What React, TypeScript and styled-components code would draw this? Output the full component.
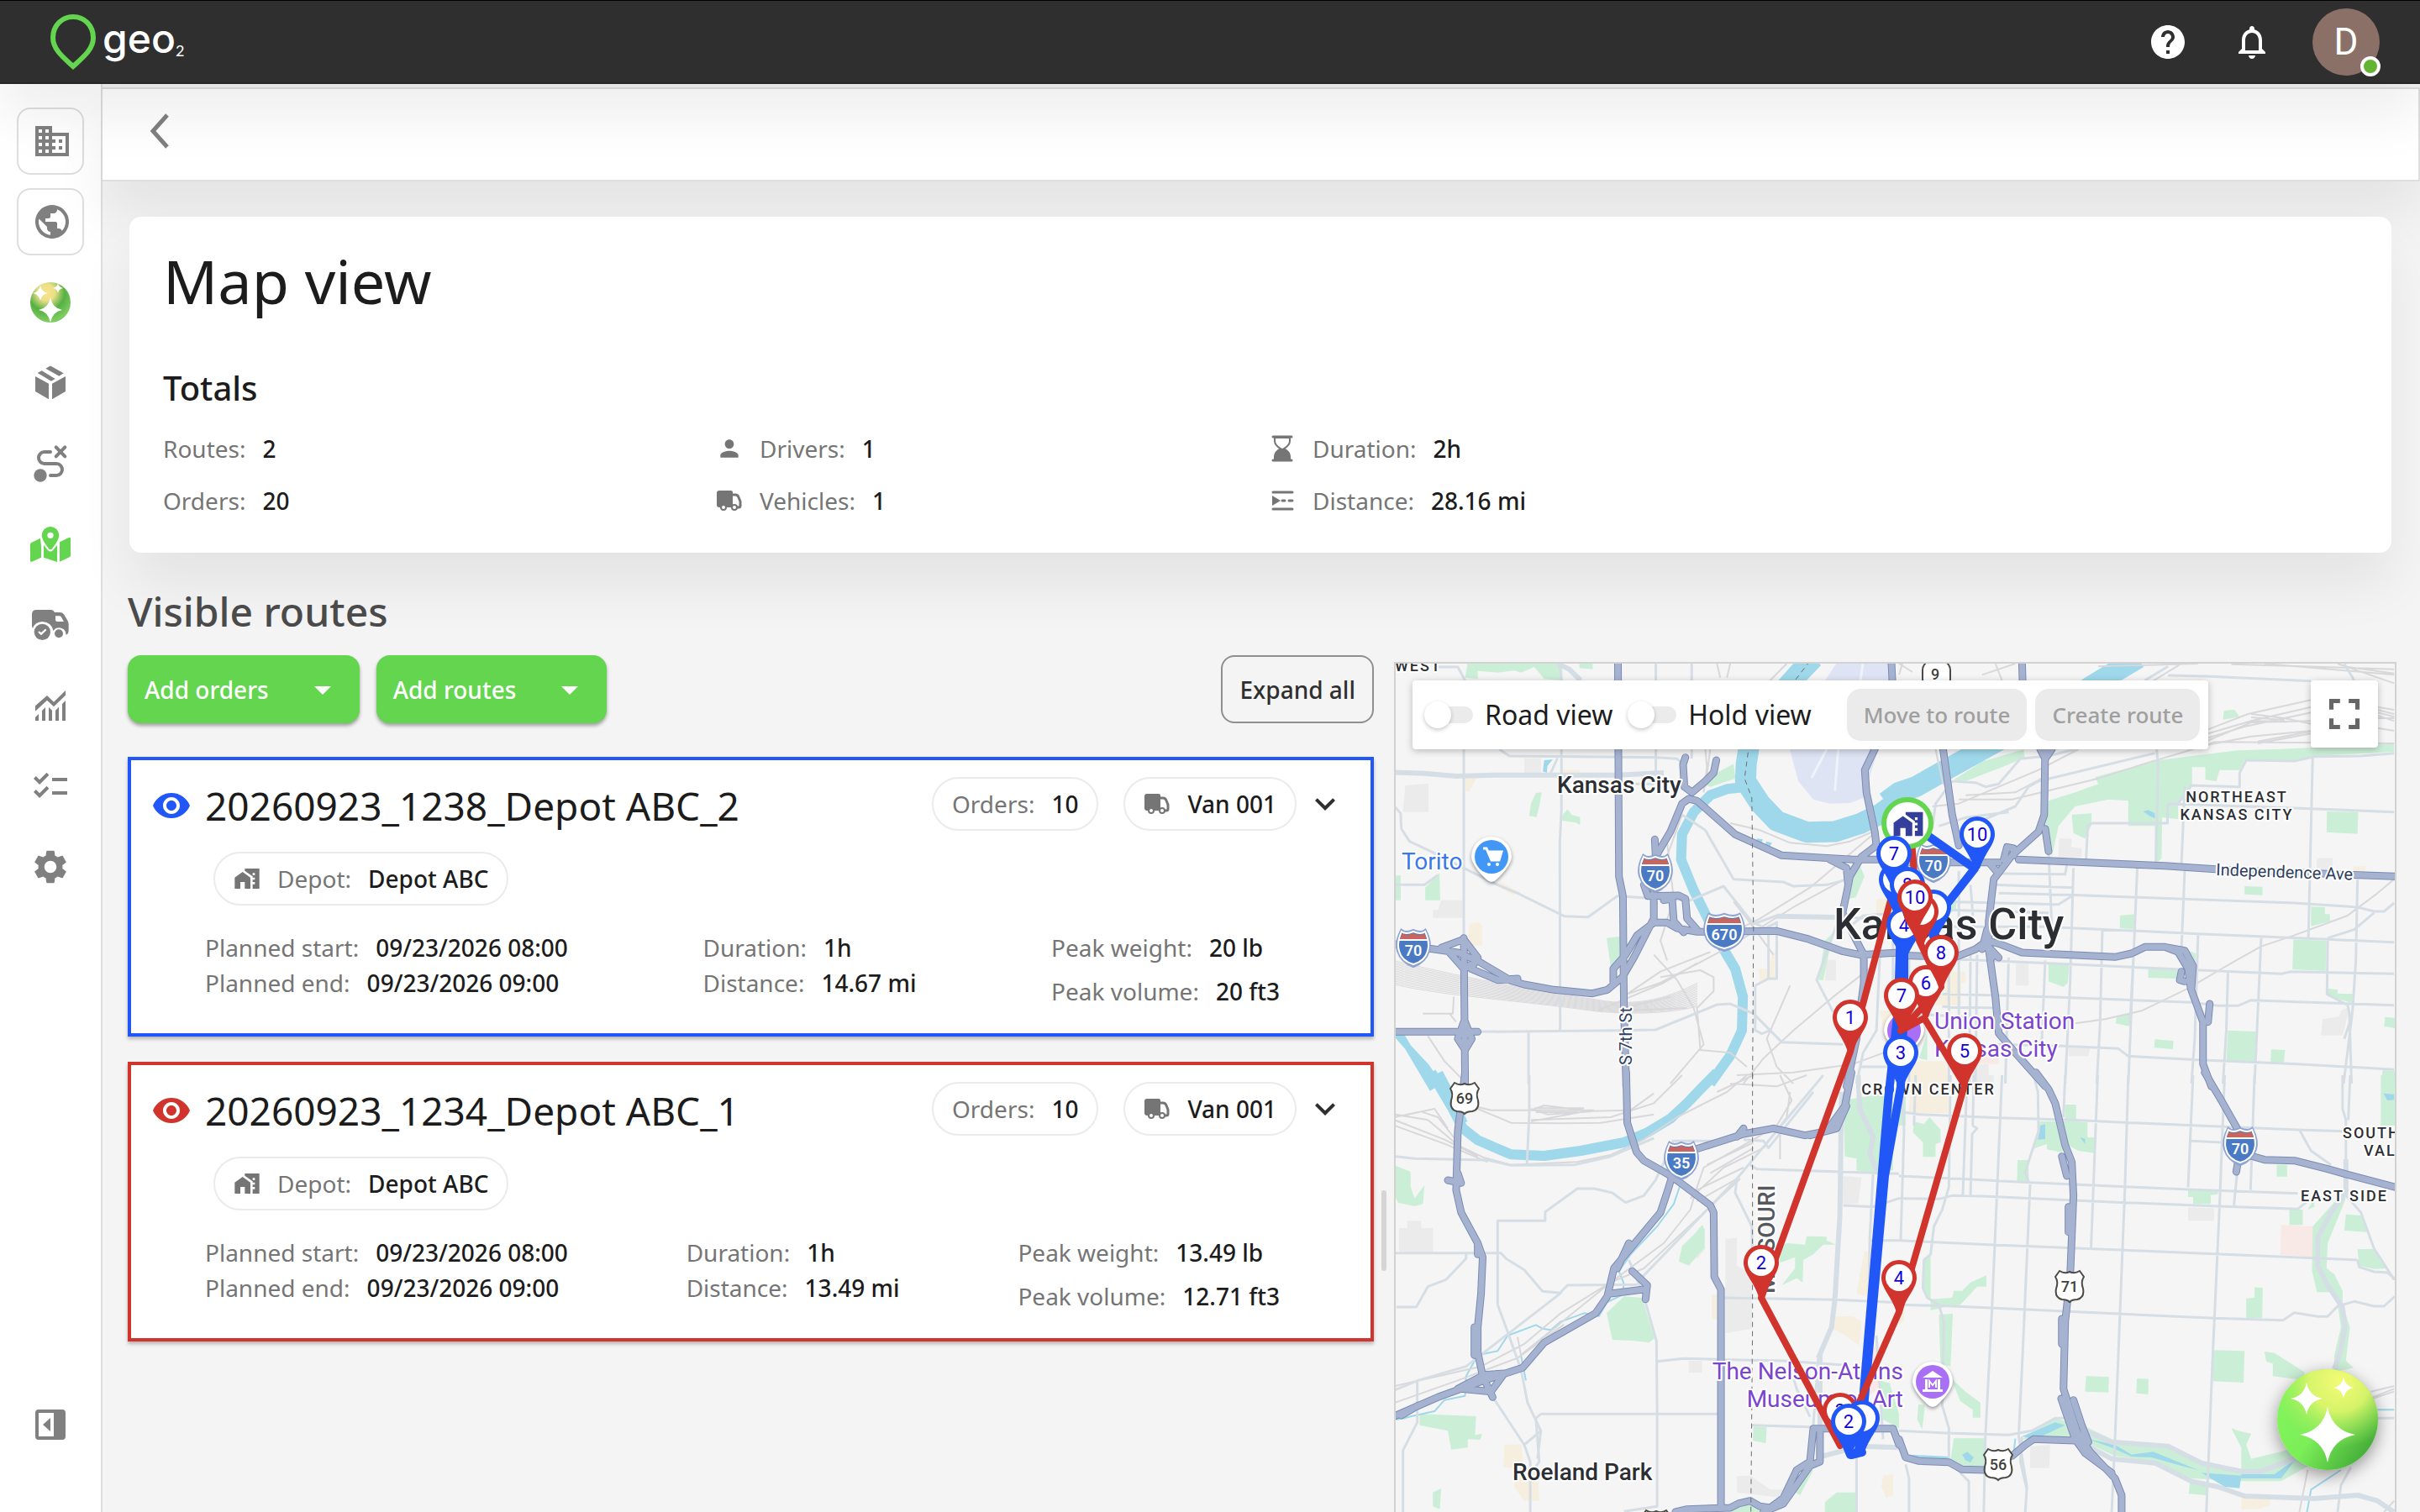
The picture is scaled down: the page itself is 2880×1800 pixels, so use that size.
import React, { useState } from "react";
import styled, { createGlobalStyle } from "styled-components";
import {
  MdArrowDropDown,
  MdChecklist,
  MdDomain,
  MdFullscreen,
  MdHelp,
  MdHomeWork,
  MdKeyboardArrowDown,
  MdNotificationsNone,
  MdPerson,
  MdPublic,
  MdSettings,
  MdVisibility,
} from "react-icons/md";

const color = {
  green: "#63d54e",
  blue: "#2257f7",
  red: "#d0342c",
  ink: "#1c1c1c",
  muted: "#757575",
  icon: "#808080",
  line: "#dedede",
  page: "#f4f4f4",
  header: "#2f2f2f",
};

const softShadow = "0 40px 64px rgba(0, 0, 0, 0.065)";

const GlobalStyle = createGlobalStyle`
  *, *::before, *::after { box-sizing: border-box; }
  body { margin: 0; background: ${color.page}; }
  body, button, input { font-family: "Noto Sans", sans-serif; }
  h1, h2, h3, p, dl, dd, dt, ul { margin: 0; padding: 0; }
  ul { list-style: none; }
  svg { display: block; flex: none; }
  button { cursor: pointer; }
`;

/* ---------- shell ---------- */

const Shell = styled.div`
  display: flex;
  flex-direction: column;
  height: 100vh;
  overflow: hidden;
  color: ${color.ink};
  font-size: 28px;
  line-height: 40px;
`;

const Header = styled.header`
  position: relative;
  z-index: 2;
  display: flex;
  align-items: center;
  justify-content: space-between;
  flex: none;
  height: 100px;
  padding: 0 48px 0 60px;
  background: ${color.header};
  border-top: 1px solid #000;
  border-bottom: 2px solid #262626;
  box-shadow: ${softShadow};
`;

const Brand = styled.a`
  display: flex;
  align-items: center;
  gap: 6px;
  color: #fff;
  text-decoration: none;
`;

const BrandText = styled.span`
  font: 500 48px/64px Inter, sans-serif;
  padding-bottom: 8px;

  sub {
    font: 400 18px/18px Lato, sans-serif;
    vertical-align: baseline;
    position: relative;
    top: 4px;
  }
`;

const HeaderActions = styled.div`
  display: flex;
  align-items: center;
  gap: 52px;
`;

const IconButton = styled.button`
  display: grid;
  place-items: center;
  padding: 0;
  border: 0;
  background: none;
  color: inherit;
`;

const HeaderIcon = styled(IconButton)`
  color: #fff;
`;

const Avatar = styled(IconButton)`
  position: relative;
  width: 80px;
  height: 80px;
  margin-left: -4px;
  border-radius: 50%;
  background: #8a7066;
  color: #fff;
  font: 400 44px/80px Roboto, sans-serif;

  &::after {
    content: "";
    position: absolute;
    right: -1px;
    bottom: -1px;
    width: 24px;
    height: 24px;
    border: 4px solid #fff;
    border-radius: 50%;
    background: #64b434;
  }
`;

const Body = styled.div`
  display: flex;
  flex: 1;
  min-height: 0;
`;

const Sidebar = styled.nav`
  display: flex;
  flex-direction: column;
  justify-content: space-between;
  flex: none;
  width: 122px;
  padding: 28px 20px 64px;
  background: #fff;
  border-right: 2px solid ${color.line};
`;

const NavList = styled.ul`
  display: grid;
  gap: 16px;
`;

const NavItem = styled(IconButton)<{ $boxed?: boolean; $active?: boolean }>`
  width: 80px;
  height: 80px;
  color: ${(p) => (p.$active ? color.green : color.icon)};
  border: ${(p) => (p.$boxed ? `2px solid ${color.line}` : "0")};
  border-radius: 16px;
  padding-left: ${(p) => (p.$boxed ? "4px" : "0")};
`;

const Main = styled.main`
  display: flex;
  flex-direction: column;
  flex: 1;
  min-width: 0;
  padding-top: 4px;
`;

const TopBar = styled.div`
  display: flex;
  align-items: center;
  flex: none;
  height: 112px;
  padding: 0 56px 8px;
  background: #fff;
  border: 2px solid ${color.line};
  border-left: 0;
  box-shadow: ${softShadow};
  color: ${color.icon};
`;

const Content = styled.div`
  display: flex;
  flex-direction: column;
  flex: 1;
  min-height: 0;
  padding: 42px 28px 0 30px;
`;

/* ---------- totals ---------- */

const TotalsCard = styled.section`
  margin: 0 6px 0 2px;
  padding: 40px 40px 42px;
  border-radius: 14px;
  background: #fff;
  box-shadow: ${softShadow};
`;

const PageTitle = styled.h1`
  font-size: 72px;
  font-weight: 400;
  line-height: 72px;
`;

const SectionTitle = styled.h2`
  margin: 68px 0 28px;
  font-size: 40px;
  font-weight: 500;
  line-height: 48px;
`;

const TotalsGrid = styled.dl`
  display: grid;
  grid-template-columns: repeat(4, 1fr);
  gap: 22px 20px;
`;

const FactBox = styled.div`
  display: flex;
  align-items: center;
  gap: 20px;
  white-space: nowrap;

  dt {
    display: flex;
    align-items: center;
    gap: 20px;
    color: ${color.muted};
  }

  dd {
    font-weight: 500;
  }
`;

/* ---------- routes ---------- */

const Split = styled.div`
  display: grid;
  grid-template-columns: 1483fr 24px 1193fr;
  flex: 1;
  min-height: 0;
`;

const RoutesColumn = styled.section`
  min-width: 0;
  padding-top: 42px;
`;

const RoutesTitle = styled.h2`
  color: #4a4a4a;
  font-size: 48px;
  font-weight: 500;
  line-height: 56px;
`;

const Toolbar = styled.div`
  display: flex;
  gap: 20px;
  margin: 24px 0 40px;
`;

const AddButton = styled.button`
  display: flex;
  align-items: center;
  gap: 40px;
  height: 81px;
  padding: 0 20px;
  border: 0;
  border-radius: 16px;
  background: ${color.green};
  box-shadow: 0 3px 4px rgba(0, 0, 0, 0.35);
  color: #fff;
  font-size: 28px;
  font-weight: 500;
  white-space: nowrap;
`;

const OutlineButton = styled.button`
  height: 81px;
  margin-left: auto;
  padding: 0 20px;
  border: 2px solid #8f8f8f;
  border-radius: 16px;
  background: none;
  color: ${color.header};
  font-size: 28px;
  font-weight: 500;
  white-space: nowrap;
`;

const RouteList = styled.div`
  display: grid;
  gap: 30px;
`;

const RouteCard = styled.article<{ $color: string }>`
  padding: 20px 30px 28px 24px;
  border: 4px solid ${(p) => p.$color};
  background: #fff;
  box-shadow: 0 3px 4px rgba(0, 0, 0, 0.25);
`;

const RouteHead = styled.div`
  display: flex;
  align-items: center;
`;

const RouteLabel = styled.div`
  display: flex;
  align-items: center;
  gap: 16px;
  height: 64px;
  margin-right: auto;
  padding-top: 4px;
`;

const EyeButton = styled(IconButton)<{ $color: string }>`
  color: ${(p) => p.$color};
`;

const RouteName = styled.h3`
  font-size: 46px;
  font-weight: 400;
  line-height: 60px;
  white-space: nowrap;
`;

const Chip = styled.dl`
  display: flex;
  width: max-content;
  height: 64px;
  padding: 0 22px;
  border: 2px solid #ebebeb;
  border-radius: 32px;

  svg {
    color: ${color.muted};
  }
`;

const HeadChip = styled(Chip)`
  margin-left: 30px;
`;

const DepotChip = styled(Chip)`
  margin: 25px 0 30px 74px;
`;

const Chevron = styled(IconButton)`
  margin-left: 10px;
  color: ${color.header};
`;

const Facts = styled.div`
  display: flex;
  justify-content: space-between;
  padding: 0 78px 0 64px;
`;

const FactColumn = styled.dl<{ $loose?: boolean }>`
  display: grid;
  align-content: start;
  gap: ${(p) => (p.$loose ? "12px" : "2px")};
  height: 94px;
`;

const Handle = styled.div`
  align-self: start;
  justify-self: center;
  width: 6px;
  height: 96px;
  margin-top: 759px;
  border-radius: 3px;
  background: #d5d5d5;
`;

/* ---------- map ---------- */

const MapFrame = styled.section`
  position: relative;
  margin-top: 130px;
  overflow: hidden;
  border: 2px solid #d2d2d2;
  border-bottom: 0;
  background: #f5f5f5;
`;

const MapCanvas = styled.svg`
  width: 100%;
  height: 100%;
  font-family: Roboto, sans-serif;
`;

const MapToolbar = styled.div`
  position: absolute;
  top: 20px;
  left: 20px;
  display: flex;
  align-items: center;
  gap: 10px;
  height: 82px;
  padding: 10px;
  border-radius: 4px;
  background: #fff;
  box-shadow: 0 2px 8px rgba(0, 0, 0, 0.25);
`;

const ToggleLabel = styled.label`
  display: flex;
  align-items: center;
  gap: 14px;
  padding: 0 4px;
  font-size: 32px;
  white-space: nowrap;
`;

const Toggle = styled.input`
  position: relative;
  appearance: none;
  width: 58px;
  height: 20px;
  margin: 0;
  border-radius: 10px;
  background: #ebebeb;

  &::before {
    content: "";
    position: absolute;
    top: -6px;
    left: 0;
    width: 32px;
    height: 32px;
    border-radius: 50%;
    background: #fff;
    box-shadow: 0 2px 5px rgba(0, 0, 0, 0.22);
  }

  &:checked::before {
    left: 26px;
    background: ${color.green};
  }
`;

const MapAction = styled.button`
  height: 62px;
  padding: 0 20px;
  border: 0;
  border-radius: 16px;
  background: #ebebeb;
  color: #9f9f9f;
  font-size: 26px;
  font-weight: 500;
  white-space: nowrap;
`;

const ActionGroup = styled.div`
  display: flex;
  gap: 10px;
  margin-left: 28px;
`;

const FullscreenButton = styled(IconButton)`
  position: absolute;
  top: 20px;
  right: 20px;
  width: 80px;
  height: 80px;
  border-radius: 4px;
  background: #fff;
  box-shadow: 0 2px 8px rgba(0, 0, 0, 0.25);
  color: #666;
`;

const AssistantButton = styled(IconButton)`
  position: fixed;
  right: 50px;
  bottom: 50px;
  width: 120px;
  height: 120px;
  border-radius: 50%;
  box-shadow: 0 6px 20px rgba(0, 0, 0, 0.4);
`;

/* ---------- icons ---------- */

const star = (cx: number, cy: number, rx: number, ry: number) => {
  const k = 0.16;
  return `M${cx} ${cy - ry}Q${cx + rx * k} ${cy - ry * k} ${cx + rx} ${cy}Q${cx + rx * k} ${cy + ry * k} ${cx} ${cy + ry}Q${cx - rx * k} ${cy + ry * k} ${cx - rx} ${cy}Q${cx - rx * k} ${cy - ry * k} ${cx} ${cy - ry}Z`;
};

const SparkleSmall = () => (
  <svg width="48" height="48" viewBox="0 0 48 48">
    <defs>
      <radialGradient id="orb-small" cx="0.4" cy="0.25" r="0.7">
        <stop offset="0" stopColor="#fbe38c" />
        <stop offset="0.3" stopColor="#e9e087" />
        <stop offset="0.65" stopColor="#55b043" />
        <stop offset="1" stopColor="#7ccb5e" />
      </radialGradient>
    </defs>
    <circle cx="24" cy="24" r="24" fill="url(#orb-small)" />
    <path d={star(24, 33, 14, 15)} fill="#fff" />
    <path d={star(12, 13, 9, 9)} fill="#fff" />
    <path d={star(33, 7, 6, 6)} fill="#fff" />
  </svg>
);

const SparkleLarge = () => (
  <svg width="120" height="120" viewBox="0 0 120 120">
    <defs>
      <linearGradient id="orb-base" x1="0" y1="0.3" x2="0.9" y2="0.9">
        <stop offset="0" stopColor="#83f55c" />
        <stop offset="0.45" stopColor="#7bee58" />
        <stop offset="1" stopColor="#41a836" />
      </linearGradient>
      <radialGradient id="orb-glow" cx="0.62" cy="0.12" r="0.66">
        <stop offset="0" stopColor="#f3fb74" />
        <stop offset="0.45" stopColor="#e2f56c" stopOpacity="0.9" />
        <stop offset="1" stopColor="#a0e85c" stopOpacity="0" />
      </radialGradient>
    </defs>
    <circle cx="60" cy="60" r="60" fill="url(#orb-base)" />
    <circle cx="60" cy="60" r="60" fill="url(#orb-glow)" />
    <path d={star(60, 78, 33, 33)} fill="#fff" />
    <path d={star(35, 35, 19, 19)} fill="#fff" />
    <path d={star(79, 22, 12, 12)} fill="#fff" />
  </svg>
);

const BoxIcon = () => (
  <svg width="48" height="48" viewBox="48 36 144 144" fill="currentColor">
    <path d="M66 84L114 110V166L66 138ZM126 110L174 84V138L126 166ZM74 72L89 64L137 93L123 101ZM103 56L117 48Q120 47 123 48L167 73L151 83Z" />
  </svg>
);

const RouteIcon = () => (
  <svg width="48" height="48" viewBox="48 324 144 144" fill="none" stroke="currentColor" strokeWidth="12" strokeLinecap="round">
    <path d="M120 354H98a20 21 0 0 0 0 42H142a20 21 0 0 1 0 42H120M140 337L172 370M172 337L140 370" />
    <circle cx="84" cy="438" r="23" fill="currentColor" stroke="none" />
  </svg>
);

const MapPinIcon = () => (
  <svg width="48" height="48" viewBox="48 612 144 144" fill="currentColor">
    <path d="M52 678L84 662Q86 683 87 689V731L54 746Q48 748 48 742V684Q48 680 52 678ZM153 676L186 660Q192 658 192 664V722Q192 728 188 730L153 746ZM96 686L110 704Q120 715 130 704L144 686V747L96 731Z" />
    <path fillRule="evenodd" d="M120 621A31 31 0 0 1 151 652Q151 668 126 700Q120 706 114 700Q89 668 89 652A31 31 0 0 1 120 621ZM120 641a11 11 0 1 0 0 22a11 11 0 1 0 0-22Z" />
  </svg>
);

const TruckCheckIcon = () => (
  <svg width="48" height="48" viewBox="48 900 144 144" fill="currentColor">
    <path fillRule="evenodd" d="M70 918H122Q131 918 135 927H153Q163 927 168 934L180 954Q185 962 185 970V990Q185 1005 176 1007Q174 983 151 982Q136 983 131 993Q124 962 91 960Q64 962 57 984Q54 980 54 975V934Q54 918 70 918ZM138 940V954Q138 960 144 960H168L158 943Q156 940 152 940Z" />
    <circle cx="91" cy="997" r="29" />
    <circle cx="150" cy="1003" r="15" />
    <path d="M80 998L87 1004L102 990" fill="none" stroke="#fff" strokeWidth="7" strokeLinecap="round" />
  </svg>
);

const ChartIcon = () => (
  <svg width="48" height="48" viewBox="48 1188 144 144" fill="currentColor">
    <path d="M66 1261L108 1224L132 1247L174 1206V1223L132 1264L108 1241L66 1280ZM66 1302L78 1290V1314H66ZM90 1278L102 1266V1314H90ZM114 1266L126 1277V1314H114ZM138 1277L150 1265V1314H138ZM162 1254L174 1242V1314H162Z" />
  </svg>
);

const PanelIcon = () => (
  <svg width="48" height="48" viewBox="0 0 48 48" fill="currentColor">
    <path fillRule="evenodd" d="M10 6H38Q42 6 42 10V38Q42 42 38 42H10Q6 42 6 38V10Q6 6 10 6ZM10 10V38H28V10ZM24 16V32L15 24Z" />
  </svg>
);

const BackIcon = () => (
  <svg width="24" height="42" viewBox="0 0 24 42" fill="none" stroke="currentColor" strokeWidth="5">
    <path d="M21 2L4 21L21 40" />
  </svg>
);

const VanIcon = () => (
  <svg width="32" height="32" viewBox="0 0 32 32">
    <path d="M4 4H18Q20 4 20 6V24H4Q1 24 1 21V7Q1 4 4 4Z" fill="currentColor" />
    <path d="M20 9H23Q26 9 27 12L29 17V22Q29 24 27 24H20" fill="none" stroke="currentColor" strokeWidth="3" />
    <circle cx="9" cy="24" r="3" fill="#fff" stroke="currentColor" strokeWidth="2" />
    <circle cx="22" cy="24" r="3" fill="#fff" stroke="currentColor" strokeWidth="2" />
  </svg>
);

const HourglassIcon = () => (
  <svg width="32" height="32" viewBox="0 0 32 32">
    <path d="M5 2H27M5 30H27" stroke="currentColor" strokeWidth="3" strokeLinecap="round" />
    <path d="M7 3V7Q7 12 14 16Q7 20 7 25V29H25V25Q25 20 18 16Q25 12 25 7V3Z" fill="none" stroke="currentColor" strokeWidth="2" />
    <path d="M7 29V25Q7 20 13 16H19Q25 20 25 25V29Z" fill="currentColor" />
  </svg>
);

const DistanceIcon = () => (
  <svg width="32" height="32" viewBox="0 0 32 32">
    <path d="M5 6H28M5 26H28" stroke="currentColor" strokeWidth="3" strokeLinecap="round" />
    <path d="M16 16H19M24 16H28" stroke="currentColor" strokeWidth="3" strokeLinecap="round" />
    <path d="M4 10L14 16L4 22Z" fill="currentColor" />
  </svg>
);

/* ---------- map drawing ---------- */

type Tile = {
  x: number;
  y: number;
  [layer: string]: string | number;
};

/* Every tile covers 620 x 510 map pixels and keeps its geometry on its own grid. */
const tiles: Tile[] = [
  {
    x: 1640,
    y: 770,
    airport: "M1385 50H1550L1545 120L1505 366L1460 540L1420 558L1360 560L1310 545L1265 480L1240 370L1300 200Z",
    runway: "M1350 366L1305 468M1385 366L1375 515M1460 50L1452 120",
    park:
      "M270 55H555V120L500 115L490 100L470 72L430 92L410 85L360 92L300 86V115L262 110ZM606 55H646V80L606 76ZM475 522L492 520L487 560L477 608L455 604L460 560ZM570 580L583 600L608 608V637L595 628L552 620L556 600ZM50 818L68 816V905H50ZM185 808L187 905H142V860ZM688 1040L728 1035V1110L700 1140ZM980 490L1020 450L1070 418L1076 470L1000 500ZM1450 780L1464 820L1438 895L1418 900L1430 820ZM1345 1050L1370 1020L1340 1190H1325Z",
    sand:
      "M556 438L608 440V450L556 452ZM262 465L298 466L275 517L262 515ZM275 990L300 983L313 995V1066L270 1070ZM370 840L430 880L405 885L350 850ZM1185 1100L1197 1090L1195 1190L1150 1195L1145 1150L1175 1150ZM1500 900H1568V960H1500ZM1510 1300H1568V1420H1530Z",
    block: "M440 398H490V450H440ZM82 495L152 488V590L75 590ZM190 905L255 905V968H165V940H180ZM1350 1118H1378V1192H1345Z",
    pond: "M500 405L526 402L510 425L508 450L496 445ZM1140 685L1158 688L1155 700L1138 696ZM1168 695L1186 700L1180 712L1166 706Z",
    river: "M1310 40L1262 100L1210 170L1120 330L1108 420L1106 480L1150 560L1200 622L1290 662L1375 660L1450 632L1510 598L1590 530",
    creek: "M1110 500L1050 508L1000 530L950 590L915 670L912 760L950 870L992 970L1030 1060L1075 1150L1098 1250L1095 1370L1060 1460L1000 1560",
    creek2: "M50 1375L90 1430L145 1500L190 1580M70 1390L110 1470L165 1580",
    rail:
      "M1020 60L1030 110M1060 60L1050 110M985 365L990 430L980 520M1000 365L985 500M1230 60L1180 120M870 700L890 900L850 1050L870 1120M915 600L860 780M1060 630L1150 655L1240 700L1350 712L1420 695L1490 660M1490 670L1300 860L1150 970L1050 1030M1490 700L1420 820L1250 930L1060 1070L980 1120L850 1200L750 1240M135 1310H225L228 1250M215 1310L235 1340M850 1180L970 1155L1010 1180V1230L960 1290L970 1440L1060 1450L1110 1500M830 1100L900 1190L950 1290L980 1420L880 1560M1070 910L1110 970L1190 1100M1240 1210L1170 1400L1200 1500L1250 1560M1500 1130L1370 1250L1250 1370L1160 1470L1100 1560M1568 1430L1430 1490L1250 1520L1080 1530M150 1390L200 1480L250 1540M660 1300L860 1200L960 1130M750 1240L850 1160L1000 1090M740 1290L880 1250M740 1300L930 1290",
    minor:
      "M170 72H240L262 120M258 366L258 1040M545 60L552 120V580L547 700L548 1368M836 60V460M944 60V400M365 366L395 390L840 395L900 400L920 420M50 570L68 595L70 650L95 695L175 740L258 790L350 845L420 880L560 962L632 965L720 890L850 900L940 905L1040 855L1130 990L1200 960L1375 965L1568 975M50 850H140L180 815M915 600L985 655L1070 830L1220 840L1250 855L1350 850L1400 835M300 1375L720 1370L835 1368L1020 1278L1060 1275L1130 1310L1215 1412L1400 1420M453 1375V1560M1135 1210V1370L1155 1382L1180 1370M1175 1000V1185M1200 980V1185H1175L1135 1210M1130 985L1165 1005L1200 985M1390 960L1320 1190L1370 1305M1420 1000L1460 960L1568 950M1450 1500H1568M1510 1110L1500 1370L1460 1450L1440 1560M1550 1000V1560M620 490H830M520 450L540 398",
    wide: "M50 448L140 452L235 462L350 458L530 458H720L860 450M540 60L575 80L610 120M1200 962L1375 966",
    major:
      "M722 50L725 820L737 890L740 1290L747 1570M50 1375H300M258 1040L262 1570M50 1062L155 1078L240 1092L300 1122L400 1192L440 1206L530 1225L645 1238L690 1225L735 1180L770 1110L830 970L830 860M832 760L845 730L880 660L915 560L935 543L960 550L1075 670L1215 745L1430 760H1510M708 1200V1150L745 1100L780 1030L830 985L870 985L900 1005L960 1018L1200 1015L1290 1042L1400 1088L1450 1100L1568 1092M833 688L836 760M925 395L918 420L922 500L945 520L985 480L1010 450L1018 405M190 1075L258 1045L300 1110L280 1150L360 1190L420 1185M210 1085L258 1150L300 1120M800 850L812 890L905 888L925 900L930 970L960 1010M860 905L885 900L890 980L920 1020M258 1340L240 1400L262 1440L282 1400L262 1340M1545 50L1548 125L1495 366L1465 440L1470 520L1495 660L1500 710L1455 750L1420 820L1412 870L1398 950L1440 1050L1462 1100L1462 1200L1440 1400L1410 1570M1360 760L1410 790L1415 850",
    border: "M1300 50L1255 120L1115 366L1103 470L1125 540L1130 1000L1127 1570",
  },
  {
    x: 2260,
    y: 770,
    park:
      "M375 366L378 395L320 425L200 480L165 475L250 410ZM450 550L530 520L600 490L590 465L780 405L1020 370L1150 365L1490 345V375L1250 390L1180 410L1040 405L1025 440L965 440L955 480L922 475V430H882V490L840 560V615L792 610L790 755L770 780V640H690V550L630 545L530 570L515 590L480 640L460 750L440 650ZM520 600L580 595L578 640L560 685L525 665ZM1288 588L1382 590L1380 668L1287 662ZM978 228L1010 225L1025 250L975 260ZM1040 855L1094 857V887L1040 884ZM1240 928L1282 930V955L1297 955V980L1240 998ZM1187 1045L1286 1050L1284 1158L1184 1152ZM665 960L708 955V1008L665 1005ZM450 1130L512 1135L508 1200L495 1215L450 1195ZM750 1150L838 1155L835 1185L750 1182ZM860 1080L893 1095V1130L870 1130ZM1290 1220L1320 1225V1238L1365 1240L1362 1272L1288 1245ZM655 1320L697 1312L692 1355L652 1345ZM990 1370L1075 1374L1072 1483L985 1480ZM770 1402L826 1407L824 1437L768 1432ZM1120 1438L1162 1440L1158 1492L1118 1488ZM1463 1322L1492 1325V1362L1460 1355ZM1455 1512L1492 1515V1560H1452ZM155 900L172 895V940L155 950ZM60 1470L85 1380V1475Z",
    sand: "M1368 785L1404 783V803L1366 803ZM140 1160L200 1160V1200H187V1280H110V1240H140ZM0 1490L70 1480L140 1480L150 1560H0Z",
    block: "M482 685H520L518 715L550 720V752H480ZM1258 755H1305V808H1256ZM352 1130H390V1210H352ZM1330 1300L1357 1285L1335 1388H1270L1275 1330L1325 1320ZM510 1430L575 1435L570 1462H510ZM220 1490H270V1560H220Z",
    rose: "M240 1440L300 1450V1490L240 1488Z",
    river: "M-40 555L0 520L50 500L140 440L300 335L450 235L600 125L720 40",
    pond: "M735 588L750 583L770 595V612L755 605Z",
    rail:
      "M0 60L40 90M0 100L10 60M350 60L250 100M310 120L290 60M850 60L740 140M900 60L600 70M1000 62L1490 80M1100 60L1490 100M1320 60L1490 130M1340 70L1490 95M100 570L180 560L300 500L420 440L540 366M180 545L340 545L600 470L760 410L860 375L950 340L1490 345M200 530L350 520L430 470M930 295L1050 240L1240 190M930 310L1060 265L1240 215M930 325L1040 285L1240 235M930 335L1060 270L1240 265M930 350L1060 320L1240 300M1060 240L1160 255L1240 275M1060 252L1160 262M1060 264L1170 268M1080 345L1240 310M1080 338L1240 302M1440 215L1490 225M1440 225L1490 240M1440 235L1490 250M1440 245L1490 265M1440 255L1490 255M1440 290L1490 300M1490 830L1440 880L1350 960L1190 1030L1090 1070L1000 1130L870 1220L730 1300L620 1330L530 1345M130 480L150 520M110 366L130 480",
    minor:
      "M810 102L920 105L1240 122M740 120L810 70M1340 60L1370 120M1490 380L1390 390L1250 392L1190 408L1045 405L1025 450V500L880 495L840 560L808 565V630L580 630L568 640L563 760M810 560L1240 578L1490 590M775 366L780 420L773 775M860 500L850 775M1245 395L1232 1040M160 480L230 485L260 500L300 490L365 400L450 390L530 366M100 650L110 560L160 480M250 620L350 570L390 500L420 480L770 380M120 640L200 610L330 590M450 730L460 1000M300 810L500 812L505 780M285 850L525 860M300 880L510 886L720 895L1190 915L1380 930L1430 945L1460 945L1490 915M130 910L480 920L520 890M150 940L450 950M40 1000L450 1000L530 1005L720 1015L900 1025L1100 1035L1290 1045L1490 1055M1290 1040L1370 1010L1430 950M60 1110L450 1130L720 1145L1150 1168L1180 1160L1490 1168M130 1240L450 1250L880 1270L960 1282H1020L1060 1262L1200 1268L1490 1280M130 1285L290 1290M280 1420L480 1425L660 1435L690 1462L900 1475L1200 1490L1490 1510M717 790L690 1560M860 795L850 1080M1380 830L1375 1120L1365 1300L1338 1560M1355 1300L1362 1560M525 790L515 1200L500 1560M900 1030L890 1400L880 1560M1090 1040L1070 1560M1290 1050L1288 1240L1350 1280L1360 1330L1340 1400M990 1165L985 1370L975 1560M705 1115L695 1350M612 1010L605 1350L595 1560M440 1120L430 1400L410 1440M330 1110L320 1560M235 1100L230 1560M215 1100L212 1560M180 800V1350M215 850L225 1000M150 1120V1560M30 1100V1560M0 1180L140 1165M30 1310L310 1330",
    major:
      "M370 50L372 125M132 360L160 600L180 710M440 360L437 600L420 660L340 745L285 830L270 980V1080L290 1250L300 1380L350 1450L440 1570M440 650L450 730M425 366L440 400L460 366M0 770H300M270 770L292 800M315 760L325 715L345 720L345 745M360 760L800 782L1000 798L1490 820M0 1102L170 1108L230 1080L265 1050L300 1060L370 1092L650 1108L700 1095L740 1072L800 1072L840 1090L870 1150L878 1220L915 1340L915 1490L940 1570M265 1010L250 1080M260 1060L300 1110M280 1110L260 1060M800 1072L860 1085L885 1140L880 1220M850 1160L845 1190L860 1195M935 1275L930 1340",
  },
  {
    x: 1640,
    y: 1280,
    park:
      "M50 322L98 345V398L110 440L140 392L135 460L110 468L60 455L50 430ZM975 535L983 550V615L935 680L905 665L915 610L950 570ZM1290 575L1350 577V590L1378 605L1340 605L1310 640L1280 660L1278 740L1260 725L1215 750L1255 690V650L1210 670L1200 620L1230 600L1285 605ZM740 790L795 795L832 940L815 955L765 948L705 945L688 850ZM125 1210L295 1218L292 1285L313 1280L308 1302L270 1300V1330L220 1337L210 1270L125 1250ZM50 1230L120 1210L80 1230ZM165 1490L190 1475L186 1550L165 1540ZM1130 1255L1170 1258L1167 1315L1128 1305ZM1380 1490H1440V1560H1345V1525ZM1060 1550L1120 1520L1160 1560H1050ZM1400 90L1550 60V340L1500 355L1440 340V298L1405 290ZM1240 1480L1290 1400L1310 1410L1270 1500ZM1510 1090L1540 1100L1568 1210V1260L1520 1230Z",
    sand: "M1005 785L1020 782V870H1005ZM1370 862L1430 860L1455 880L1448 965L1400 925L1365 905ZM380 1320L430 1318L440 1400H480L485 1520H440L410 1470L412 1405L378 1400ZM1463 630L1490 630L1500 800L1440 780ZM1520 1430L1550 1425V1500L1530 1510L1515 1470Z",
    block: "M88 520H130V546H166V630H63V546H88ZM1045 585L1080 580V680L1125 710V905L1045 922ZM940 600L975 585L985 620L960 655L940 630ZM1395 360L1455 365L1445 460H1395ZM935 1020H975V1062H935ZM1080 1432L1120 1430L1180 1480H1240L1220 1510L1080 1490Z",
    rose: "M1480 1000L1500 960L1510 1110L1475 1150Z",
    creek: "M1020 -10L970 50L930 100L880 155L810 205L740 240L610 270L500 288L400 283L300 232L255 190L225 120L160 -10",
    creek2: "M185 -10L225 80L260 170",
    stream: "M910 390L890 460L840 540L760 640L725 700L740 745L735 785L690 810L665 860L620 850L550 880L520 910L495 905L475 892L390 930L360 985L300 1000L265 1075L262 1145L200 1160L170 1200L55 1230M545 890L430 1000L445 1090M1335 1365L1400 1345L1460 1325H1560",
    rail:
      "M50 140L150 160L240 250L320 295L400 320L600 310L700 285L800 230L900 150L1050 60L1110 0M50 160L200 230L300 290M50 180L200 245L330 310M50 150L130 130L180 150L240 240M90 140L170 120L210 190M300 120L400 170L550 172L670 170L830 140M290 110L340 125H460L500 108L640 128L760 125L830 65M460 120L510 140L640 130M460 125H650M460 165L620 130M470 118H620M475 132H600M915 0L830 100L700 150L460 160M1020 60L1130 0M1060 30L1200 40L1290 0M1210 0L1245 90L1200 180L1130 230L980 330L960 400L940 480L860 600L700 740L550 850L440 960L310 1040L50 1110M1240 60L1230 150L1160 260L1040 330L940 440M1130 240L990 320M1130 260L1000 350M1100 330L960 410M1080 370L960 450M1210 200V300M1090 370L800 690L700 740L430 1000M430 1000L420 935M50 1170L240 1090L420 1010L560 890",
    minor:
      "M455 0V140L448 320M50 290L110 298L330 303L400 322L590 320L700 290L830 225M50 635H370L385 655L440 695L495 772L550 778L265 1040L120 1090L50 1125M265 640V655L205 730L150 755L115 828L55 828M360 820V520H503V488L600 405H650L705 420L745 455L800 430L835 375L865 300L888 235H1050M550 775L570 750L780 748M360 820L385 900L430 1050L450 1170L490 1270L480 1370M118 1090V1240L75 1340V1560M340 1140L440 1320L458 1380V1560M755 660L800 790L838 950L840 1210V1540L740 1558M840 1022L920 1012L1120 1018L1220 1020L1400 1035M490 1210L1025 1210M490 1210L475 1225L485 1380L465 1415M440 1320L490 1270M1340 0L1080 370L780 740M1080 370L1075 420L1125 540L1127 650M1120 320L1140 335L1568 352M1040 795L1375 802L1568 812M1125 1250L1300 1256M1395 350L1390 500L1375 800L1365 900L1325 1010L1310 1250M1395 60V350M1440 1350V1560M1490 350L1480 580L1470 1260M1400 465L1490 470L1568 440M1480 590H1568M1500 930L1520 1300M1300 1070L1240 1040L1260 1120L1300 1220M1100 230L1160 235L1175 260L1310 60M950 260H890",
    wide: "M1395 60L1390 500L1375 800L1365 900L1325 1010M1445 0L1450 120L1490 220L1480 280L1500 340M1340 1360L1450 1325L1568 1330M1330 1000V1250",
    major:
      "M747 -10L750 170L778 275L800 305L870 352L905 380L1000 465L1010 490L1012 720L1032 765V1545M262 -10L240 200L235 410L250 490L300 600L315 650L310 780L300 900V990L315 1075L345 1150M885 360L875 400L850 490L710 690L690 790L655 850L500 955L435 1045L320 1090L180 1150L45 1220M700 780L800 765M755 600L720 690M240 350L250 385L210 375M300 640L300 600M290 900L290 1000M765 700L810 750L805 800M1425 -10L1405 110L1350 200L1285 215L1190 190L1100 210L955 265M1300 215L1380 190L1410 110M1100 190L1080 220M240 1120L320 1070L380 1065L340 1130L250 1120M120 1180L70 1215M895 1560L930 1550L1060 1545L1085 1530L1120 1520L1150 1540L1180 1545L1220 1510L1260 1410L1300 1380L1310 1262H1550L1568 1320M1160 1560L1220 1530L1300 1395L1330 1380V1262",
    border: "M1127 -10L1127 900L1122 1570",
  },
  {
    x: 2260,
    y: 1280,
    park:
      "M45 165L75 175L92 150L125 195V240L110 245V292H72V240L42 205ZM500 105H533V165L567 168V222H588V278L540 270L500 245L490 275L445 265V245L400 265L425 165H500ZM357 303H390V380H355ZM1450 0H1492V180H1450ZM1137 320H1168V362H1137ZM870 412L960 415V425L938 428V460H885V435H870ZM1175 480H1215V535H1175ZM1345 497L1395 502L1408 560L1340 555ZM1380 622L1430 620L1465 690L1430 692L1385 680ZM1245 540L1320 440H1345L1290 600L1287 690L1310 710L1335 770V820L1357 900L1345 1020L1368 1045L1310 1060V1000L1330 900L1320 820L1300 775H1258L1243 700ZM263 715V755L235 755L185 820L130 830L95 840V800L160 795L165 770H190L215 740ZM75 665L95 640V800L75 780ZM120 855L162 852L155 1040L125 1030ZM155 1080L200 1130L245 1170V1223H222V1195L185 1165ZM58 1175L78 1178L70 1265L55 1230ZM1045 797L1070 795V757L1095 760L1093 868H1045ZM945 982L1040 985L1037 1098L945 1093ZM563 1074L632 1078L630 1133L560 1130ZM716 1083L751 1085L750 1140L714 1136ZM1100 987L1130 992L1220 1060V1090L1125 1075V1030L1105 1022ZM165 1297L262 1297L260 1410H205L155 1375ZM370 1300L470 1225L560 1255L650 1305L800 1320L900 1380L1050 1410L1100 1405L1200 1360L1240 1390L1180 1430L1150 1450L1030 1450L880 1440L770 1380L650 1360L560 1310ZM1000 1260L1020 1270L1060 1280L1045 1320L1060 1370L1200 1330V1400L1030 1430V1330ZM875 1455L930 1458L925 1500L872 1495ZM1230 480L1250 440V470ZM0 0L20 40V180H0Z",
    sand: "M35 30H150V135H30ZM1030 1510L1115 1505L1118 1535L1080 1550H1030ZM0 830H15V880L0 890Z",
    block: "M870 472L948 475V520H870ZM395 1325L455 1320L452 1403H395ZM230 0H285V25H230Z",
    rose: "M1150 535L1245 540V648L1148 642Z",
    pond: "M425 180L440 175V228L418 230ZM545 222L560 228V245ZM1458 65L1490 68V88L1470 90ZM190 1355L205 1345L225 1365L215 1383L200 1375ZM370 1290L470 1240L500 1250L410 1300ZM570 1300L650 1320L700 1355L765 1345L900 1410L850 1395L760 1365L700 1362L640 1330ZM910 1420L1030 1430L1025 1475L980 1470ZM1030 1425L1130 1425L1195 1370L1150 1440H1030ZM30 1355L150 1362V1380L40 1372Z",
    stream: "M1330 1410L1240 1480L1228 1560M1440 1195H1490M350 1298L345 1350",
    rail: "M1420 1130L1490 1110M1425 1150L1490 1120M1425 1155L1490 1130M1230 1410L1205 1560M1490 1520L1460 1560",
    minor:
      "M0 130L60 140L300 152L520 160L700 170L900 180L1200 195L1340 200M0 360L180 370L370 382L680 398L870 408L1200 422M0 440L120 442L160 430L250 432L680 455L960 468L1200 478L1240 440M0 590L270 605L680 625L1380 660M0 820L120 823L400 838L660 852L950 868L1155 875L1190 848L1260 862H1290L1320 825L1370 808L1430 825H1460L1492 790M0 1270L140 1278L330 1285L400 1270L470 1225L510 1225M1380 660L1385 685L1430 702L1470 705L1495 730M310 0L280 830L260 1290L255 1560M395 380L370 1050L360 1290L385 1470L380 1560M690 0L680 400L665 850L650 1300L640 1560M598 0L578 615M500 0L495 150M980 0L965 460L945 980L925 1560M885 0L870 400M1070 0L1058 410M880 235L970 240M1020 320L1008 465M1335 0V120L1345 160V430M1358 0L1352 160M1205 195L1240 270L1300 320M1345 430L1390 490L1430 620L1490 730M10 0L15 200L5 590M50 0L45 180M155 0L150 400L130 480L105 540L95 640L75 660L72 760L85 795L120 820M205 0L192 430M225 0L222 180L235 190L220 210L215 430M405 0L418 60L420 200L395 290L380 345L390 380M120 820L135 880L130 1180L150 1260V1380L210 1450V1560M20 1390L30 1440V1560M370 1290L365 1380L385 1480M1440 1225H1490M1360 1400L1330 1465L1320 1560",
    wide:
      "M1345 300V420L1300 490L1260 580V680L1290 750L1335 830L1342 900L1330 980L1310 1050M510 1225L560 1270L640 1310L810 1325L910 1385L1030 1415H1090L1190 1370M560 1320L640 1370L770 1385L880 1450L960 1470L1040 1503L1250 1512L1380 1500L1440 1520L1490 1560",
    major:
      "M412 -10L450 50L470 100L500 250L520 310L525 430L515 720L500 880L495 1120L535 1270L575 1345L650 1440L670 1500V1570M490 290L505 360M510 470V560M490 870V960M488 1155L530 1300L560 1350L640 1420M525 1160L550 1250L570 1310M920 -10L970 90L1020 195M1015 345L1020 310M1050 285L1100 302L1190 305L1290 335L1350 355L1495 400M0 1300L20 1365L60 1378L150 1382L190 1408L260 1410M340 1360L380 1320L405 1300L530 1305",
  },
];

const layers: { key: string; fill?: string; stroke?: string; width?: number; dash?: string; cap?: "butt" | "round" }[] = [
  { key: "airport", fill: "#dfe4f5" },
  { key: "runway", stroke: "#f0f3fb", width: 3 },
  { key: "block", fill: "#ebebeb" },
  { key: "sand", fill: "#f6efdf" },
  { key: "rose", fill: "#f8e8e6" },
  { key: "park", fill: "#cbeed7" },
  { key: "pond", fill: "#9fd8ea" },
  { key: "river", stroke: "#9fd8ea", width: 25 },
  { key: "creek", stroke: "#9fd8ea", width: 12 },
  { key: "creek2", stroke: "#9fd8ea", width: 8 },
  { key: "stream", stroke: "#9fd8ea", width: 2 },
  { key: "rail", stroke: "#d8d8db", width: 2 },
  { key: "minor", stroke: "#d6dee5", width: 3 },
  { key: "wide", stroke: "#d6dee5", width: 6 },
  { key: "major", stroke: "#7b8bb6", width: 9, cap: "round" },
  { key: "major", stroke: "#a6b3d0", width: 7, cap: "round" },
  { key: "border", stroke: "#6a6d70", width: 1, dash: "6 5" },
];

const BaseMap = () => (
  <g strokeLinejoin="round">
    {Array.from({ length: 15 }, (_, i) => (
      <path
        key={i}
        d={`M1660 ${1144 + i * 2}C1720 ${1158 + i * 2} 1800 ${1176 + i} 1900 ${1190 + i}C1950 ${1200 + i * 0.6} 1990 ${1186 + i * 1.4} 2020 ${1170 + i * 2}`}
        fill="none"
        stroke="#dadadc"
        strokeWidth="1"
      />
    ))}
    {layers.map((layer, i) => (
      <g
        key={i}
        fill={layer.fill ?? "none"}
        stroke={layer.stroke}
        strokeWidth={layer.width}
        strokeDasharray={layer.dash}
        strokeLinecap={layer.cap ?? "butt"}
      >
        {tiles.map((tile) =>
          tile[layer.key] ? (
            <path
              key={`${tile.x}-${tile.y}`}
              d={String(tile[layer.key])}
              transform={`translate(${tile.x} ${tile.y}) scale(0.39541 0.33333)`}
              vectorEffect="non-scaling-stroke"
            />
          ) : null
        )}
      </g>
    ))}
  </g>
);

const MapText = styled.text<{ $size: number; $color?: string; $weight?: number; $tracked?: boolean }>`
  font-size: ${(p) => p.$size}px;
  font-weight: ${(p) => p.$weight ?? 400};
  letter-spacing: ${(p) => (p.$tracked ? "2px" : "normal")};
  fill: ${(p) => p.$color ?? "#2c2e33"};
  stroke: #fff;
  stroke-width: 4px;
  stroke-linejoin: round;
  paint-order: stroke;
`;

const Interstate = ({ x, y, label }: { x: number; y: number; label: string }) => {
  const w = label.length > 2 ? 22 : 18;
  return (
    <g transform={`translate(${x} ${y})`}>
      <path
        d={`M${-w + 4} -20Q${-w / 2} -16 0 -20Q${w / 2} -16 ${w - 4} -20Q${w + 3} -6 ${w} 4Q${w - 4} 17 0 22Q${-w + 4} 17 ${-w} 4Q${-w - 3} -6 ${-w + 4} -20Z`}
        fill="#4a7ac4"
        stroke="#8fa3d0"
        strokeWidth="4"
      />
      <path
        d={`M${-w + 4} -19Q${-w / 2} -15 0 -19Q${w / 2} -15 ${w - 4} -19Q${w + 2} -6 ${w - 1} 4Q${w - 4} 16 0 20Q${-w + 4} 16 ${-w + 1} 4Q${-w - 2} -6 ${-w + 4} -19Z`}
        fill="#4a7ac4"
        stroke="#fff"
        strokeWidth="2"
      />
      <path d={`M${-w + 5} -17Q${-w / 2} -13 0 -17Q${w / 2} -13 ${w - 5} -17L${w - 2} -10H${-w + 2}Z`} fill="#c9655f" />
      <path d={`M${-w + 1} -9H${w - 1}`} stroke="#fff" strokeWidth="2" />
      <text y="10" textAnchor="middle" fontSize="18" fontWeight="600" fill="#fff">
        {label}
      </text>
    </g>
  );
};

const UsShield = ({ x, y, label }: { x: number; y: number; label?: string }) => (
  <g transform={`translate(${x} ${y})`}>
    <path
      d="M-12 -18Q-6 -14 0 -17Q6 -14 12 -18L17 -11Q13 -5 16 3Q18 14 9 16Q3 16 0 19Q-3 16 -9 16Q-18 14 -16 3Q-13 -5 -17 -11Z"
      fill="#fff"
      stroke="#4b4b46"
      strokeWidth="2"
    />
    {label && (
      <text y="7" textAnchor="middle" fontSize="18" fontWeight="500" fill="#3f3f3c">
        {label}
      </text>
    )}
  </g>
);

const PoiMark = styled.g`
  filter: drop-shadow(0 2px 2px rgba(0, 0, 0, 0.4));
`;

const Poi = ({ x, y, fill, children }: { x: number; y: number; fill: string; children?: React.ReactNode }) => (
  <PoiMark transform={`translate(${x} ${y})`}>
    <path d="M-24 0A24 24 0 0 1 24 0Q23 11 6 27Q0 33 -6 27Q-23 11 -24 0Z" fill="#fff" />
    <circle r="20" fill={fill} />
    {children}
  </PoiMark>
);

type Stop = { x: number; y: number; label?: string; tone: string };

const StopPin = ({ x, y, label, tone }: Stop) => (
  <g transform={`translate(${x} ${y})`}>
    <path d="M0 -21A21 21 0 0 1 21 0C21 13 9 22 3 41H-3C-9 22 -21 13 -21 0A21 21 0 0 1 0 -21Z" fill={tone} />
    <circle r="16" fill="#fff" />
    {label && (
      <text y="8" textAnchor="middle" fontSize="22" fill="#1200d8">
        {label}
      </text>
    )}
  </g>
);

const stops: Stop[] = [
  { x: 2257, y: 1047, tone: color.blue },
  { x: 2254, y: 1016, label: "7", tone: color.blue },
  { x: 2266, y: 1101, label: "4", tone: color.blue },
  { x: 2301, y: 1080, tone: color.blue },
  { x: 2270, y: 1053, label: "8", tone: color.blue },
  { x: 2286, y: 1085, tone: color.red },
  { x: 2279, y: 1068, label: "10", tone: color.red },
  { x: 2292, y: 1170, label: "6", tone: color.red },
  { x: 2263, y: 1185, label: "7", tone: color.red },
  { x: 2310, y: 1134, label: "8", tone: color.red },
  { x: 2202, y: 1211, label: "1", tone: color.red },
  { x: 2262, y: 1253, label: "3", tone: color.blue },
  { x: 2338, y: 1251, label: "5", tone: color.red },
  { x: 2096, y: 1503, label: "2", tone: color.red },
  { x: 2260, y: 1521, label: "4", tone: color.red },
  { x: 2190, y: 1679, label: "3", tone: color.red },
  { x: 2216, y: 1688, tone: color.blue },
  { x: 2200, y: 1692, label: "2", tone: color.blue },
];

const RouteMap = () => (
  <MapCanvas viewBox="1661 790 1190 1010" preserveAspectRatio="xMinYMin slice" role="img" aria-label="Routes in Kansas City">
    <BaseMap />

    <UsShield x={1743} y={1307} label="69" />
    <UsShield x={2463} y={1531} label="71" />
    <UsShield x={2378} y={1743} label="56" />
    <UsShield x={1971} y={1816} />
    <rect x="2288" y="786" width="33" height="34" rx="12" fill="#fff" stroke="#4b4b46" strokeWidth="2" />
    <text x="2303" y="809" textAnchor="middle" fontSize="18" fontWeight="500" fill="#3f3f3c">9</text>
    <Interstate x={1970} y={1039} label="70" />
    <Interstate x={1682} y={1128} label="70" />
    <Interstate x={2052} y={1109} label="670" />
    <Interstate x={2301} y={1027} label="70" />
    <Interstate x={2001} y={1381} label="35" />
    <Interstate x={2666} y={1364} label="70" />

    <MapText x="1660" y="799" $size={18} $weight={500} $tracked>WEST</MapText>
    <MapText x="1853" y="944" $size={28} $weight={500}>Kansas City</MapText>
    <MapText x="1668" y="1035" $size={28} $color="#3b78e7">Torito</MapText>
    <MapText x="2182" y="1118" $size={52} $weight={500}>Kansas City</MapText>
    <MapText x="2662" y="955" textAnchor="middle" $size={18} $weight={500} $tracked>NORTHEAST</MapText>
    <MapText x="2662" y="976" textAnchor="middle" $size={18} $weight={500} $tracked>KANSAS CITY</MapText>
    <MapText x="2295" y="1303" textAnchor="middle" $size={18} $weight={500} $tracked>CROWN CENTER</MapText>
    <MapText x="2788" y="1355" $size={18} $weight={500} $tracked>SOUTH</MapText>
    <MapText x="2813" y="1376" $size={18} $weight={500} $tracked>VAL</MapText>
    <MapText x="2738" y="1430" $size={18} $weight={500} $tracked>EAST SIDE</MapText>
    <MapText x="1800" y="1762" $size={28} $weight={500}>Roeland Park</MapText>
    <MapText x="2265" y="1642" textAnchor="end" $size={28} $color="#7b44cf">The Nelson-Atkins</MapText>
    <MapText x="2265" y="1675" textAnchor="end" $size={28} $color="#7b44cf">Museum of Art</MapText>
    <MapText x="2302" y="1225" $size={28} $color="#7b44cf">Union Station</MapText>
    <MapText x="2302" y="1258" $size={28} $color="#7b44cf">Kansas City</MapText>
    <MapText transform="translate(1942 1268) rotate(-90)" $size={20} $color="#2f4060">S 7th St</MapText>
    <MapText transform="translate(2112 1540) rotate(-90)" $size={28} $weight={500} $color="#55585c">MISSOURI</MapText>
    <MapText transform="translate(2637 1042) rotate(2)" $size={20} $color="#2f4060">Independence Ave</MapText>

    <Poi x={1775} y={1020} fill="#4296f6">
      <path d="M-10 -10H-6L0 4H9L12 -6H-4" fill="none" stroke="#fff" strokeWidth="3" />
      <path d="M-4 -6H12L9 3H-1Z" fill="#fff" />
      <circle cx="-3" cy="9" r="2" fill="#fff" />
      <circle cx="7" cy="9" r="2" fill="#fff" />
    </Poi>
    <Poi x={2300} y={1645} fill="#a970f5">
      <path d="M-12 -5L0 -13L12 -5ZM-12 9H12V12H-12ZM-9 -3H-6V9H-9ZM6 -3H9V9H6Z" fill="#fff" />
      <path d="M-4 7V-1L0 4L4 -1V7" fill="none" stroke="#fff" strokeWidth="2" />
    </Poi>
    <Poi x={2266} y={1227} fill="#a970f5" />

    <g fill="none" strokeLinejoin="round" strokeLinecap="round" strokeWidth="10">
      <path d="M2270 978L2350 1034L2300 1098" stroke={color.blue} />
      <path d="M2262 1100L2259 1200L2247 1310L2212 1728L2202 1732" stroke={color.blue} />
      <path d="M2266 1100V1200L2262 1294L2243 1400L2214 1720" stroke={color.blue} />
      <path d="M2204 1732L2216 1729" stroke={color.blue} />
      <path d="M2275 985L2269 1000L2202 1252L2096 1545L2190 1721L2260 1562L2338 1292L2290 1212L2262 1227L2310 1175L2284 1120L2275 1000" stroke={color.red} strokeWidth="8" />
    </g>

    <circle cx="2270" cy="980" r="28" fill="#fff" stroke={color.green} strokeWidth="6" />
    <MdHomeWork x={2252} y={962} size={38} color="#343f9c" />
    <StopPin x={2353} y={993} label="10" tone={color.blue} />
    {stops.map((stop, i) => (
      <StopPin key={i} {...stop} />
    ))}
  </MapCanvas>
);

/* ---------- page parts ---------- */

const Fact = ({ icon, label, value }: { icon?: React.ReactNode; label: string; value: string }) => (
  <FactBox>
    <dt>
      {icon}
      {label}:
    </dt>
    <dd>{value}</dd>
  </FactBox>
);

type Route = {
  name: string;
  tone: string;
  distance: string;
  weight: string;
  volume: string;
};

const routes: Route[] = [
  { name: "20260923_1238_Depot ABC_2", tone: color.blue, distance: "14.67 mi", weight: "20 lb", volume: "20 ft3" },
  { name: "20260923_1234_Depot ABC_1", tone: color.red, distance: "13.49 mi", weight: "13.49 lb", volume: "12.71 ft3" },
];

const RoutePanel = ({ route }: { route: Route }) => (
  <RouteCard $color={route.tone}>
    <RouteHead>
      <RouteLabel>
        <EyeButton $color={route.tone} aria-label="Hide route">
          <MdVisibility size={48} />
        </EyeButton>
        <RouteName>{route.name}</RouteName>
      </RouteLabel>
      <HeadChip>
        <Fact label="Orders" value="10" />
      </HeadChip>
      <HeadChip>
        <FactBox>
          <dt>
            <VanIcon />
          </dt>
          <dd>Van 001</dd>
        </FactBox>
      </HeadChip>
      <Chevron aria-label="Expand route">
        <MdKeyboardArrowDown size={48} />
      </Chevron>
    </RouteHead>
    <DepotChip>
      <Fact icon={<MdHomeWork size={32} />} label="Depot" value="Depot ABC" />
    </DepotChip>
    <Facts>
      <FactColumn>
        <Fact label="Planned start" value="09/23/2026 08:00" />
        <Fact label="Planned end" value="09/23/2026 09:00" />
      </FactColumn>
      <FactColumn>
        <Fact label="Duration" value="1h" />
        <Fact label="Distance" value={route.distance} />
      </FactColumn>
      <FactColumn $loose>
        <Fact label="Peak weight" value={route.weight} />
        <Fact label="Peak volume" value={route.volume} />
      </FactColumn>
    </Facts>
  </RouteCard>
);

const navItems: { label: string; icon: React.ReactNode; boxed?: boolean; active?: boolean }[] = [
  { label: "Company", icon: <MdDomain size={48} />, boxed: true },
  { label: "Region", icon: <MdPublic size={48} />, boxed: true },
  { label: "Assistant", icon: <SparkleSmall /> },
  { label: "Orders", icon: <BoxIcon /> },
  { label: "Routes", icon: <RouteIcon /> },
  { label: "Map view", icon: <MapPinIcon />, active: true },
  { label: "Vehicles", icon: <TruckCheckIcon /> },
  { label: "Analytics", icon: <ChartIcon /> },
  { label: "Tasks", icon: <MdChecklist size={48} /> },
  { label: "Settings", icon: <MdSettings size={48} /> },
];

export default function App() {
  const [roadView, setRoadView] = useState(false);
  const [holdView, setHoldView] = useState(false);

  return (
    <Shell>
      <GlobalStyle />
      <Header>
        <Brand href="#" aria-label="geo2 home">
          <svg width="56" height="68" viewBox="0 0 56 68">
            <path
              d="M27 4C40 4 51 14 51 29C51 43 38 53 27 63C16 53 3 43 3 29C3 14 14 4 27 4Z"
              fill="none"
              stroke={color.green}
              strokeWidth="6"
            />
          </svg>
          <BrandText>
            geo<sub>2</sub>
          </BrandText>
        </Brand>
        <HeaderActions>
          <HeaderIcon aria-label="Help">
            <MdHelp size={48} />
          </HeaderIcon>
          <HeaderIcon aria-label="Notifications">
            <MdNotificationsNone size={48} />
          </HeaderIcon>
          <Avatar aria-label="Account">D</Avatar>
        </HeaderActions>
      </Header>

      <Body>
        <Sidebar>
          <NavList>
            {navItems.map((item) => (
              <li key={item.label}>
                <NavItem $boxed={item.boxed} $active={item.active} aria-label={item.label}>
                  {item.icon}
                </NavItem>
              </li>
            ))}
          </NavList>
          <NavItem aria-label="Expand menu">
            <PanelIcon />
          </NavItem>
        </Sidebar>

        <Main>
          <TopBar>
            <IconButton aria-label="Back">
              <BackIcon />
            </IconButton>
          </TopBar>

          <Content>
            <TotalsCard>
              <PageTitle>Map view</PageTitle>
              <SectionTitle>Totals</SectionTitle>
              <TotalsGrid>
                <Fact label="Routes" value="2" />
                <Fact icon={<MdPerson size={32} />} label="Drivers" value="1" />
                <Fact icon={<HourglassIcon />} label="Duration" value="2h" />
                <span />
                <Fact label="Orders" value="20" />
                <Fact icon={<VanIcon />} label="Vehicles" value="1" />
                <Fact icon={<DistanceIcon />} label="Distance" value="28.16 mi" />
              </TotalsGrid>
            </TotalsCard>

            <Split>
              <RoutesColumn>
                <RoutesTitle>Visible routes</RoutesTitle>
                <Toolbar>
                  <AddButton>
                    Add orders
                    <MdArrowDropDown size={48} />
                  </AddButton>
                  <AddButton>
                    Add routes
                    <MdArrowDropDown size={48} />
                  </AddButton>
                  <OutlineButton>Expand all</OutlineButton>
                </Toolbar>
                <RouteList>
                  {routes.map((route) => (
                    <RoutePanel key={route.name} route={route} />
                  ))}
                </RouteList>
              </RoutesColumn>

              <Handle />

              <MapFrame>
                <RouteMap />
                <MapToolbar>
                  <ToggleLabel>
                    <Toggle type="checkbox" checked={roadView} onChange={() => setRoadView(!roadView)} />
                    Road view
                  </ToggleLabel>
                  <ToggleLabel>
                    <Toggle type="checkbox" checked={holdView} onChange={() => setHoldView(!holdView)} />
                    Hold view
                  </ToggleLabel>
                  <ActionGroup>
                    <MapAction>Move to route</MapAction>
                    <MapAction>Create route</MapAction>
                  </ActionGroup>
                </MapToolbar>
                <FullscreenButton aria-label="Full screen">
                  <MdFullscreen size={62} />
                </FullscreenButton>
              </MapFrame>
            </Split>
          </Content>
        </Main>
      </Body>

      <AssistantButton aria-label="Open assistant">
        <SparkleLarge />
      </AssistantButton>
    </Shell>
  );
}
